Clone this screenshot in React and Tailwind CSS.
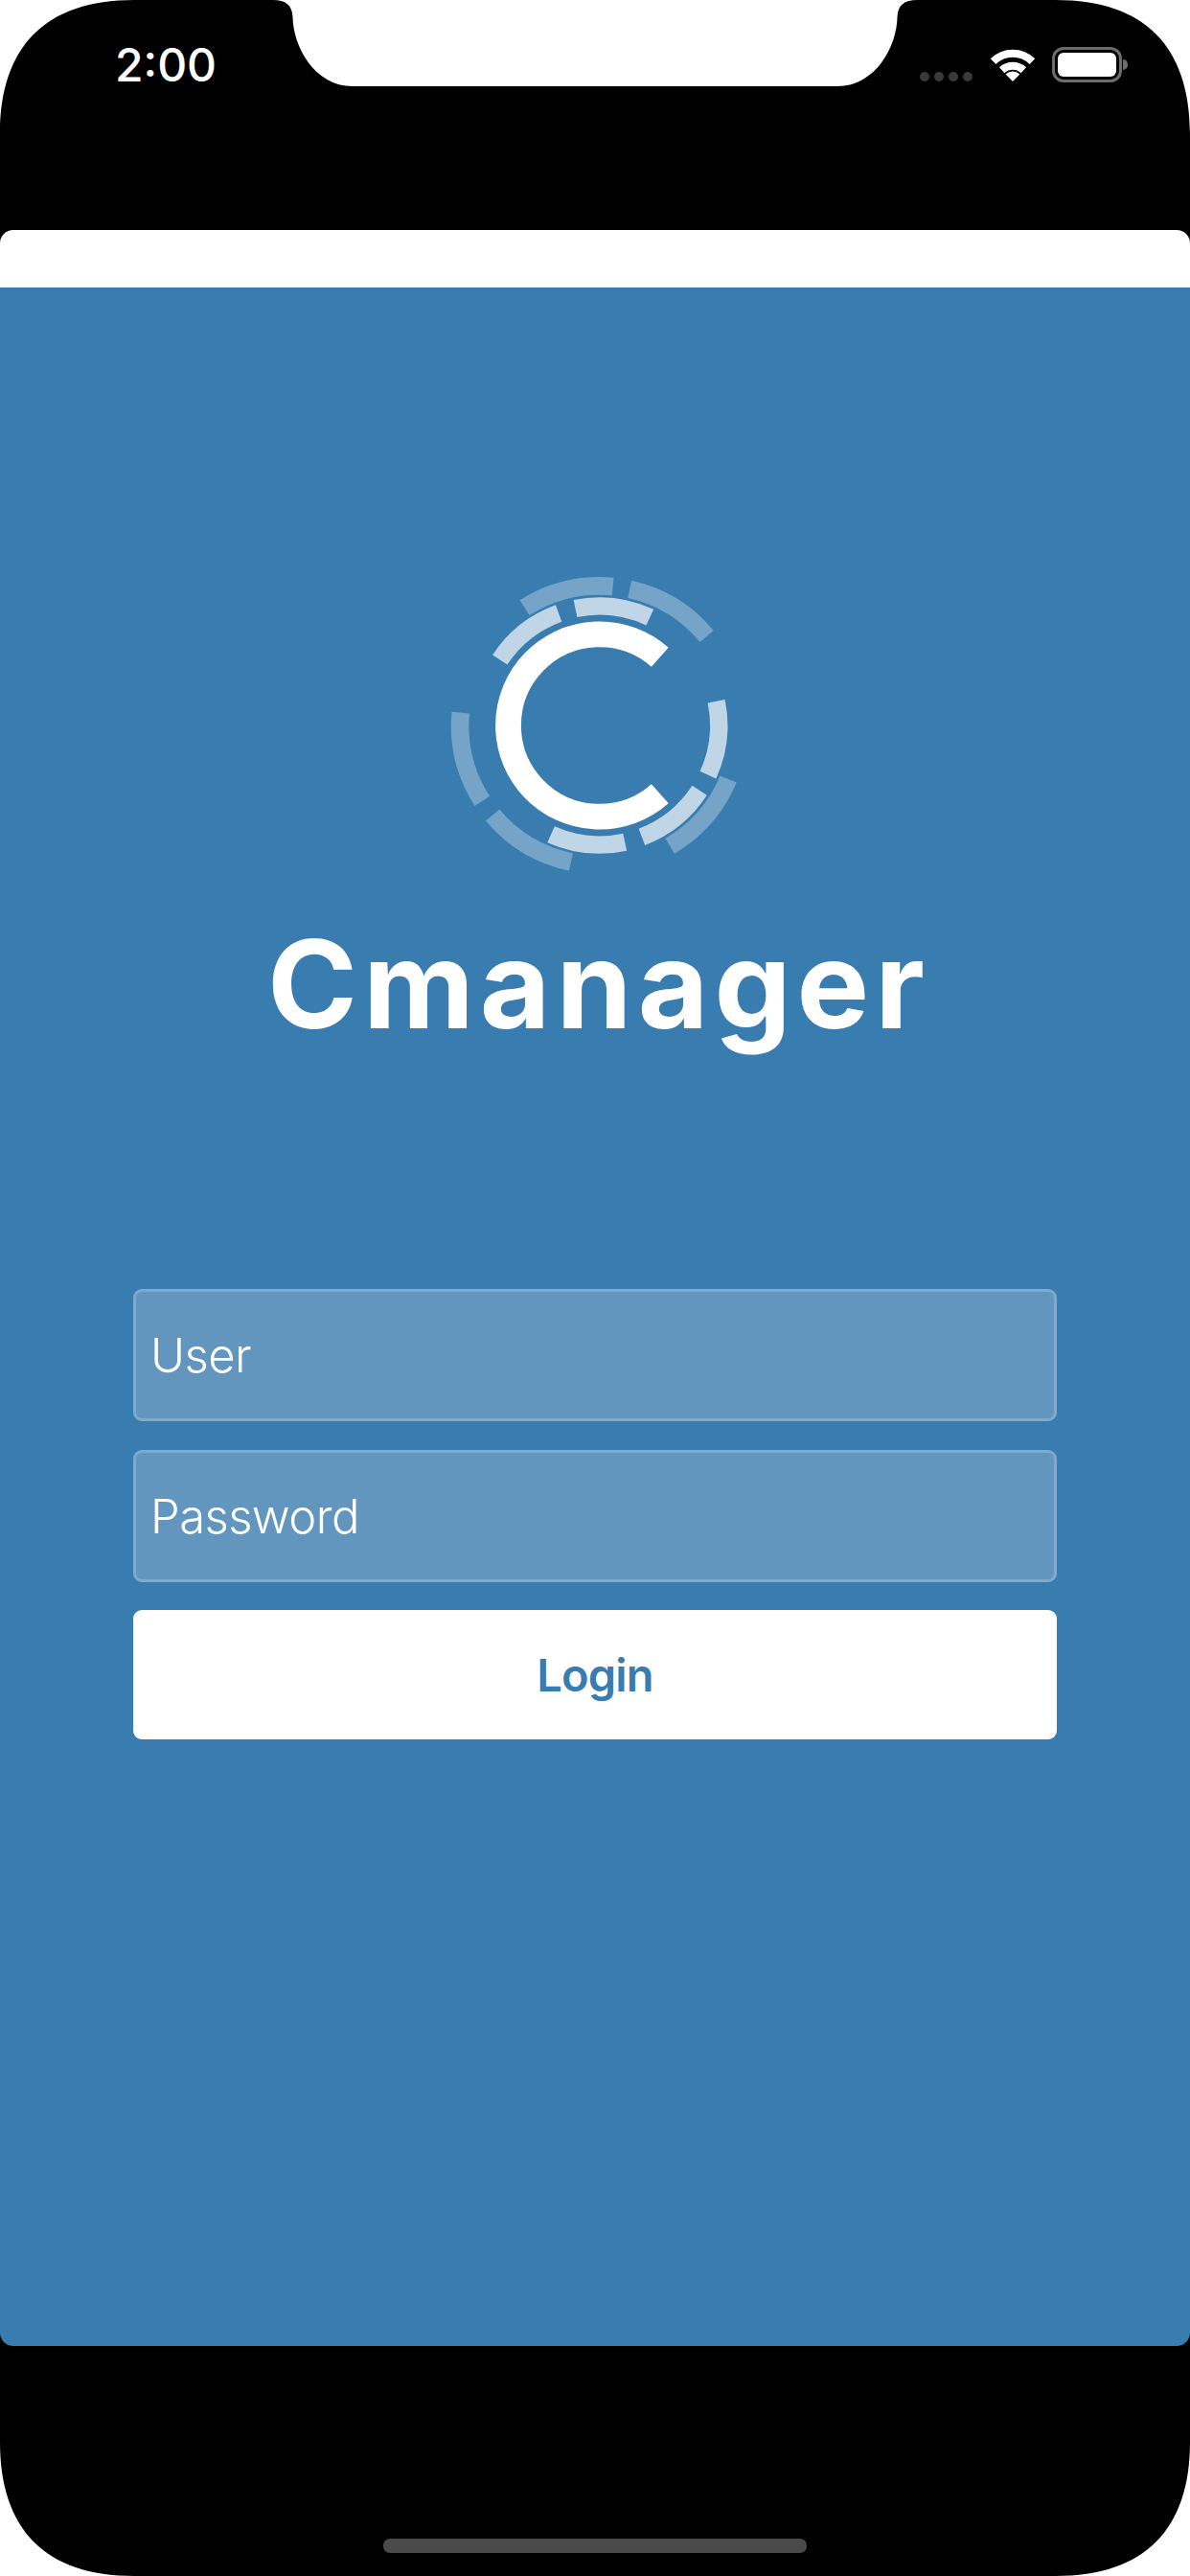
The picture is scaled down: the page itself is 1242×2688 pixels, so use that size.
import React from 'react';

// logo centre inside the 330 box, the mark sits a little right of the page centre
const CX = 169.7;
const CY = 165;

const arcPath = (r, from, to) => {
  const point = (deg) => {
    const rad = (deg * Math.PI) / 180;
    return `${(CX + r * Math.sin(rad)).toFixed(2)} ${(CY - r * Math.cos(rad)).toFixed(2)}`;
  };
  const large = to - from > 180 ? 1 : 0;
  return `M${point(from)} A${r} ${r} 0 ${large} 1 ${point(to)}`;
};

const middleRing = [
  [-11.7, 25],
  [-56.6, -20],
  [78.3, 114.5],
  [123, 159.2],
  [167.7, 204],
];

const outerRing = [
  [-32.5, 5.5],
  [12.5, 50.3],
  [112.6, 149.7],
  [191.8, 230],
  [237.2, 275.3],
];

const Logo = () => (
  <svg width="330" height="330" viewBox="0 0 330 330" fill="none">
    {outerRing.map(([a, b]) => (
      <path key={a} d={arcPath(145.6, a, b)} stroke="#76a4c9" strokeWidth="18.6" />
    ))}
    {middleRing.map(([a, b]) => (
      <path key={a} d={arcPath(124.5, a, b)} stroke="#c0d5e6" strokeWidth="18.4" />
    ))}
    <path d={arcPath(95.2, 138.5, 401.5)} stroke="#ffffff" strokeWidth="26.8" />
  </svg>
);

const Corner = ({ className }) => (
  <svg className={`absolute ${className}`} width="140" height="140" viewBox="0 0 140 140">
    <path d="M0 0H140C48 0 0 48 0 140Z" fill="#ffffff" />
  </svg>
);

const Notch = () => (
  <svg className="absolute top-0 left-[280px]" width="682" height="90" viewBox="0 0 682 90">
    <path
      d="M5 0C18 0 25 5 25.5 18C26 48 48 90 88 90H594C634 90 656 48 656.5 18C657 5 664 0 677 0Z"
      fill="#ffffff"
    />
  </svg>
);

const Wifi = () => (
  <svg width="48" height="36" viewBox="0 0 48 36" fill="none">
    <path d="M3.6 15.2A29 29 0 0 1 44.4 15.2" stroke="#ffffff" strokeWidth="8" />
    <path d="M12.7 24.3A16.6 16.6 0 0 1 35.3 24.3" stroke="#ffffff" strokeWidth="8" />
    <path d="M24 36L16.6 28.6A10.5 10.5 0 0 1 31.4 28.6Z" fill="#ffffff" />
  </svg>
);

const StatusBar = () => (
  <div className="h-[240px] flex justify-between items-start pl-[120px] pr-[65px]">
    <span className="mt-[39px] text-[48px] leading-[58px] font-medium text-white font-['Inter',sans-serif]">2:00</span>
    <div className="flex items-end mt-[49px]">
      <div className="flex gap-[5px] mb-[1px]">
        <div className="w-[10px] h-[10px] rounded-full bg-[#3a3a3a]" />
        <div className="w-[10px] h-[10px] rounded-full bg-[#3a3a3a]" />
        <div className="w-[10px] h-[10px] rounded-full bg-[#3a3a3a]" />
        <div className="w-[10px] h-[10px] rounded-full bg-[#3a3a3a]" />
      </div>
      <div className="ml-[18px] mb-[1px] flex">
        <Wifi />
      </div>
      <div className="ml-[17px] flex items-center">
        <div className="w-[73px] h-[37px] rounded-[12px] border-[3px] border-[#6c6c6c] p-[3px]">
          <div className="w-full h-full rounded-[6px] bg-white" />
        </div>
        <div className="ml-[1px] w-[5px] h-[11px] rounded-r-full bg-[#6c6c6c]" />
      </div>
    </div>
  </div>
);

const Field = ({ label }) => (
  <div className="h-[138px] flex items-center pl-[15px] pt-[2px] rounded-[9px] border-[3px] border-[#7fa9cf] bg-[#6296bf]">
    <span className="text-[49px] font-light tracking-[-0.6px] text-white font-['Inter',sans-serif]">{label}</span>
  </div>
);

export default function App() {
  return (
    <div className="relative w-[1242px] h-[2688px] flex flex-col bg-black overflow-hidden">
      <StatusBar />
      <main className="flex-1 flex flex-col">
        <div className="h-[60px] rounded-t-[14px] bg-white" />
        <div className="flex-1 flex flex-col items-center pt-[292px] rounded-b-[14px] bg-[#397cb0]">
          <Logo />
          <h1 className="mt-[28px] ml-[8px] text-[127px] leading-[154px] font-bold tracking-[6px] text-white font-['Inter',sans-serif]">Cmanager</h1>
          <div className="w-[964px] mt-[241px] flex flex-col">
            <Field label="User" />
            <div className="mt-[30px]">
              <Field label="Password" />
            </div>
            <button className="mt-[29px] h-[135px] pt-[2px] rounded-[9px] bg-white text-[47px] font-semibold tracking-[-0.8px] text-[#397cb0] font-['Inter',sans-serif]">
              Login
            </button>
          </div>
        </div>
      </main>
      <div className="h-[240px] flex flex-col items-center justify-end pb-[24px]">
        <div className="w-[442px] h-[15px] rounded-[7px] bg-[#4a4a4a]" />
      </div>
      <Notch />
      <Corner className="top-0 left-0" />
      <Corner className="top-0 right-0 rotate-90" />
      <Corner className="bottom-0 left-0 -rotate-90" />
      <Corner className="bottom-0 right-0 rotate-180" />
    </div>
  );
}
